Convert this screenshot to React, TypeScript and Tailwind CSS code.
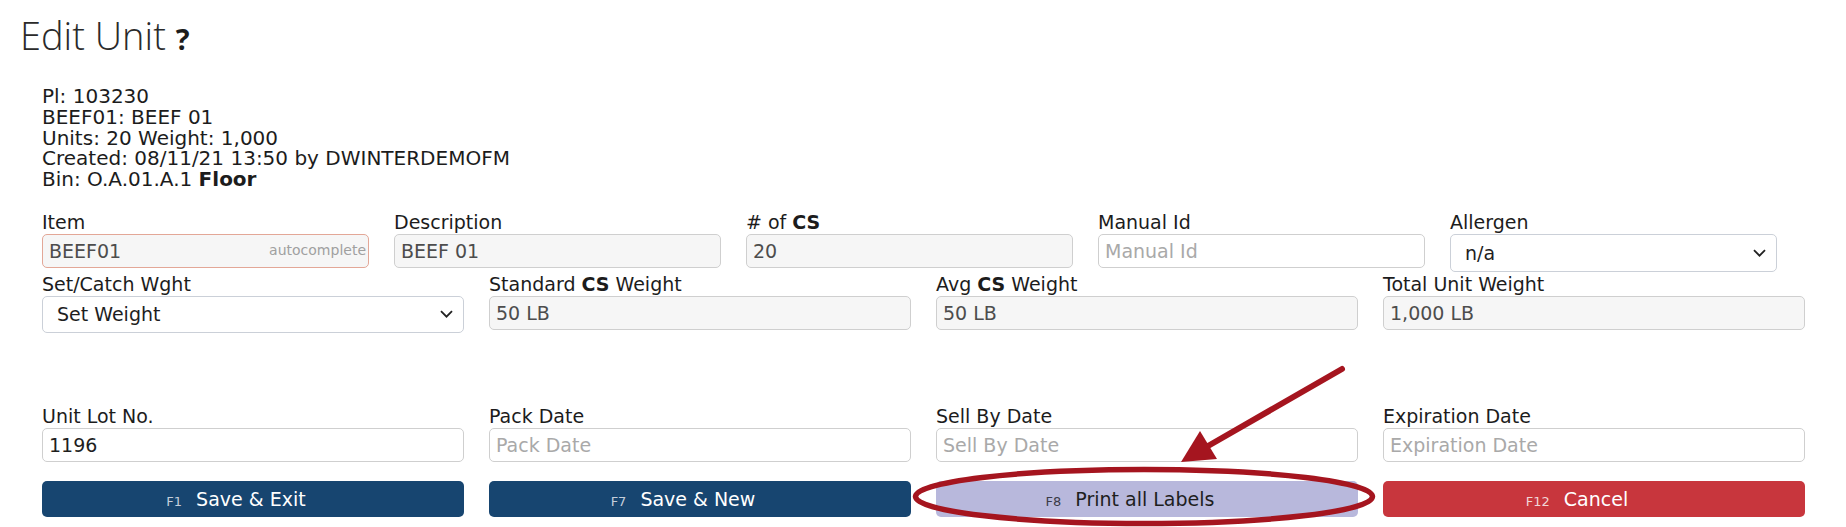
import React from 'react';

type FieldProps = {
  label: React.ReactNode;
  value?: string;
  placeholder?: string;
  readOnly?: boolean;
  hint?: string;
  accent?: boolean;
};

const Field = ({ label, value, placeholder, readOnly, hint, accent }: FieldProps) => (
  <div className="flex flex-col">
    <label className="h-[24px] leading-[24px] text-[19px] text-[#1c1c1c]">{label}</label>
    <div className="relative">
      <input
        readOnly
        value={value ?? ''}
        placeholder={placeholder}
        className={`w-full h-[34px] rounded-[5px] border px-[6px] text-[19px] outline-none placeholder:text-[#a9a9a9] ${
          readOnly ? 'bg-[#f6f6f6] text-[#4d4d4d]' : 'bg-white text-[#1e1e1e]'
        } ${accent ? 'border-[#e3a797]' : 'border-[#cfcfcf]'}`}
      />
      {hint && (
        <span className="absolute right-[3px] top-[6px] text-[14px] text-[#a0a0a0]">{hint}</span>
      )}
    </div>
  </div>
);

const SelectField = ({ label, value, height }: { label: string; value: string; height: string }) => (
  <div className="flex flex-col">
    <label className="h-[24px] leading-[24px] text-[19px] text-[#1c1c1c]">{label}</label>
    <div
      className={`${height} flex items-center justify-between rounded-[5px] border border-[#cbd0d8] bg-white pl-[14px] pr-[10px] text-[19px] text-[#1e1e1e]`}
    >
      <span>{value}</span>
      <svg width="13" height="8" viewBox="0 0 13 8" fill="none">
        <path d="M1 1.2l5.5 5.5L12 1.2" stroke="#222" strokeWidth="1.8" />
      </svg>
    </div>
  </div>
);

const ActionButton = ({
  fkey,
  text,
  tone,
}: {
  fkey: string;
  text: string;
  tone: 'navy' | 'lavender' | 'red';
}) => {
  const styles = {
    navy: 'bg-[#174570] text-white',
    lavender: 'bg-[#b8b8dc] text-[#1e1e1e]',
    red: 'bg-[#c8363d] text-white',
  }[tone];
  const keyColor = {
    navy: 'text-[#c5cedb]',
    lavender: 'text-[#3b3b48]',
    red: 'text-[#f1d6d7]',
  }[tone];
  return (
    <div className={`h-[36px] rounded-[5px] flex items-center justify-center pr-[34px] ${styles}`}>
      <span className="flex items-baseline gap-[14px]">
        <span className={`text-[13px] ${keyColor}`}>{fkey}</span>
        <span className="text-[19px]">{text}</span>
      </span>
    </div>
  );
};

export default function App() {
  return (
    <div
      className="relative w-[1846px] h-[527px] overflow-hidden bg-white text-[#222]"
      style={{ fontFamily: '"DejaVu Sans", Verdana, sans-serif' }}
    >
      {/* Title */}
      <h1
        className="pt-[16px] pl-[20px] flex items-baseline gap-[10px] h-[54px] text-[38px] leading-[38px] font-light text-[#2a2a2a]"
        style={{ fontFamily: '"Open Sans", sans-serif' }}
      >
        <span>Edit Unit</span>
        <span className="text-[29px] leading-[29px] font-bold text-[#1c1c1c]">?</span>
      </h1>

      {/* Unit summary */}
      <div className="mt-[32px] pl-[42px] text-[20px] leading-[20.8px] text-[#1c1c1c]">
        <div>Pl: 103230</div>
        <div>BEEF01: BEEF 01</div>
        <div>Units: 20 Weight: 1,000</div>
        <div>Created: 08/11/21 13:50 by DWINTERDEMOFM</div>
        <div>
          Bin: O.A.01.A.1 <b>Floor</b>
        </div>
      </div>

      {/* Row 1 */}
      <div className="mt-[20px] pl-[42px] grid grid-cols-[repeat(5,327px)] gap-x-[25px] items-start">
        <Field label="Item" value="BEEF01" readOnly accent hint="autocomplete" />
        <Field label="Description" value="BEEF 01" readOnly />
        <Field
          label={
            <>
              # of <b>CS</b>
            </>
          }
          value="20"
          readOnly
        />
        <Field label="Manual Id" placeholder="Manual Id" />
        <SelectField label="Allergen" value="n/a" height="h-[38px]" />
      </div>

      {/* Row 2 */}
      <div className="pl-[42px] grid grid-cols-[repeat(4,422px)] gap-x-[25px] items-start">
        <SelectField label="Set/Catch Wght" value="Set Weight" height="h-[37px]" />
        <Field
          label={
            <>
              Standard <b>CS</b> Weight
            </>
          }
          value="50 LB"
          readOnly
        />
        <Field
          label={
            <>
              Avg <b>CS</b> Weight
            </>
          }
          value="50 LB"
          readOnly
        />
        <Field label="Total Unit Weight" value="1,000 LB" readOnly />
      </div>

      {/* Row 3 */}
      <div className="mt-[71px] pl-[42px] grid grid-cols-[repeat(4,422px)] gap-x-[25px] items-start">
        <Field label="Unit Lot No." value="1196" />
        <Field label="Pack Date" placeholder="Pack Date" />
        <Field label="Sell By Date" placeholder="Sell By Date" />
        <Field label="Expiration Date" placeholder="Expiration Date" />
      </div>

      {/* Actions */}
      <div className="mt-[19px] pl-[42px] grid grid-cols-[repeat(4,422px)] gap-x-[25px]">
        <ActionButton fkey="F1" text="Save & Exit" tone="navy" />
        <ActionButton fkey="F7" text="Save & New" tone="navy" />
        <ActionButton fkey="F8" text="Print all Labels" tone="lavender" />
        <ActionButton fkey="F12" text="Cancel" tone="red" />
      </div>

      {/* Annotation overlay */}
      <svg
        className="absolute inset-0 pointer-events-none"
        width="1846"
        height="527"
        viewBox="0 0 1846 527"
      >
        <ellipse cx="1144" cy="496.5" rx="228.5" ry="27" fill="none" stroke="#a5151f" strokeWidth="5.5" />
        <line x1="1342" y1="369" x2="1208" y2="446" stroke="#a5151f" strokeWidth="6" strokeLinecap="round" />
        <polygon points="1181,462 1200,431 1217,459" fill="#a5151f" />
      </svg>
    </div>
  );
}
